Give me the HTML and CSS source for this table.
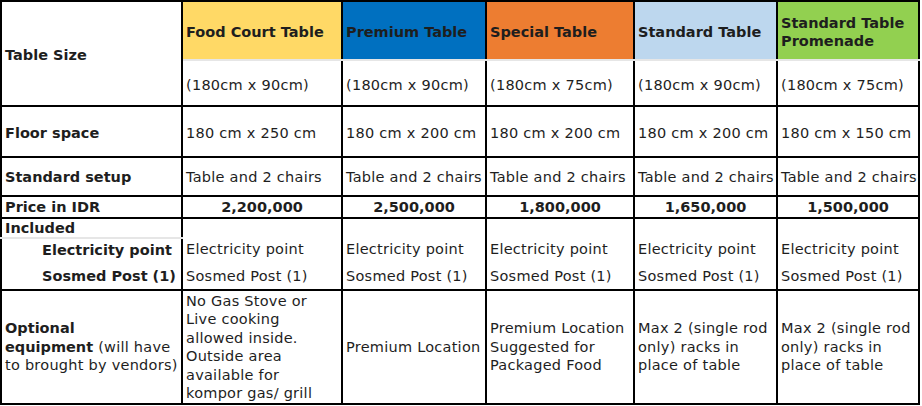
FILE: index.html
```html
<!DOCTYPE html>
<html>
<head>
<meta charset="utf-8">
<link rel="stylesheet" href="styles.css">
</head>
<body>
<table class="grid">
  <colgroup>
    <col class="c1"><col class="c2"><col class="c3"><col class="c4"><col class="c5"><col class="c6">
  </colgroup>
  <tr class="r-head">
    <th class="label" rowspan="2">Table Size</th>
    <th class="h food">Food Court Table</th>
    <th class="h premium">Premium Table</th>
    <th class="h special">Special Table</th>
    <th class="h standard">Standard Table</th>
    <th class="h promenade">Standard Table<br>Promenade</th>
  </tr>
  <tr class="r-size">
    <td class="sub">(180cm x 90cm)</td>
    <td class="sub">(180cm x 90cm)</td>
    <td class="sub">(180cm x 75cm)</td>
    <td class="sub">(180cm x 90cm)</td>
    <td class="sub">(180cm x 75cm)</td>
  </tr>
  <tr class="r-floor">
    <th class="label">Floor space</th>
    <td>180 cm x 250 cm</td>
    <td>180 cm x 200 cm</td>
    <td>180 cm x 200 cm</td>
    <td>180 cm x 200 cm</td>
    <td>180 cm x 150 cm</td>
  </tr>
  <tr class="r-setup">
    <th class="label">Standard setup</th>
    <td>Table and 2 chairs</td>
    <td>Table and 2 chairs</td>
    <td>Table and 2 chairs</td>
    <td>Table and 2 chairs</td>
    <td>Table and 2 chairs</td>
  </tr>
  <tr class="r-price">
    <th class="label">Price in IDR</th>
    <td class="price">2,200,000</td>
    <td class="price">2,500,000</td>
    <td class="price">1,800,000</td>
    <td class="price">1,650,000</td>
    <td class="price">1,500,000</td>
  </tr>
  <tr class="r-incl">
    <th class="label incl">Included</th>
    <td class="open-b"></td>
    <td class="open-b"></td>
    <td class="open-b"></td>
    <td class="open-b"></td>
    <td class="open-b"></td>
  </tr>
  <tr class="r-elec">
    <th class="label item first">Electricity point</th>
    <td class="open">Electricity point</td>
    <td class="open">Electricity point</td>
    <td class="open">Electricity point</td>
    <td class="open">Electricity point</td>
    <td class="open">Electricity point</td>
  </tr>
  <tr class="r-sos">
    <th class="label item last">Sosmed Post (1)</th>
    <td class="open-t">Sosmed Post (1)</td>
    <td class="open-t">Sosmed Post (1)</td>
    <td class="open-t">Sosmed Post (1)</td>
    <td class="open-t">Sosmed Post (1)</td>
    <td class="open-t">Sosmed Post (1)</td>
  </tr>
  <tr class="r-opt">
    <th class="label"><span class="strong">Optional<br>equipment</span> <span class="light">(will have<br>to brought by vendors)</span></th>
    <td>No Gas Stove or<br>Live cooking<br>allowed inside.<br>Outside area<br>available for<br>kompor gas/ grill</td>
    <td>Premium Location</td>
    <td>Premium Location<br>Suggested for<br>Packaged Food</td>
    <td>Max 2 (single rod<br>only) racks in<br>place of table</td>
    <td>Max 2 (single rod<br>only) racks in<br>place of table</td>
  </tr>
</table>
</body>
</html>
```

FILE: styles.css
```css
html, body {
  margin: 0;
  padding: 0;
  background: #ffffff;
}

.grid {
  border-collapse: collapse;
  table-layout: fixed;
  width: 920px;
  font-family: "DejaVu Sans", Verdana, sans-serif;
  font-size: 14.5px;
  line-height: 18.5px;
  color: #1e1e1e;
}

.c1 { width: 181px; }
.c2 { width: 160px; }
.c3 { width: 144px; }
.c4 { width: 148px; }
.c5 { width: 143px; }
.c6 { width: 142px; }

.grid th,
.grid td {
  border: 2px solid #000000;
  padding: 0 3px;
  text-align: left;
  vertical-align: middle;
  overflow: hidden;
  white-space: nowrap;
}

.grid th { font-weight: bold; }
.grid td { font-weight: normal; letter-spacing: 0.25px; }

.r-head  { height: 59px; }
.r-size  { height: 46px; }
.r-floor { height: 51px; }
.r-setup { height: 39px; }
.r-price { height: 21px; }
.r-incl  { height: 20px; }
.r-elec  { height: 25px; }
.r-sos   { height: 27px; }
.r-opt   { height: 114px; }

.r-head th { padding-top: 3px; }
.r-size td { padding-top: 4px; }
.r-floor th,
.r-floor td { padding-top: 4px; }
.r-setup th,
.r-setup td { padding-top: 2px; }
.r-price th,
.r-price td { padding-top: 1px; }
.r-elec th,
.r-elec td { padding-bottom: 2px; }

.h { border-bottom: 2px solid #e6e6e6 !important; }
.sub { border-top: 2px solid #e6e6e6 !important; }

.food { background: #ffd966; }
.premium { background: #0070c0; }
.special { background: #ed7d31; }
.standard { background: #bdd7ee; }
.promenade { background: #92d050; }

.price {
  text-align: center !important;
  font-weight: bold !important;
  letter-spacing: 0 !important;
}

.incl { border-bottom: 2px solid #e6e6e6 !important; }
.item { padding-left: 40px !important; }
.item.first { border-top: 2px solid #e6e6e6 !important; border-bottom-style: hidden; }
.item.last { border-top-style: hidden; }

.open-b { border-bottom-style: hidden !important; }
.open { border-top-style: hidden !important; border-bottom-style: hidden !important; }
.open-t { border-top-style: hidden !important; }

.strong { font-weight: bold; }
.light { font-weight: normal; letter-spacing: 0.25px; }
```
